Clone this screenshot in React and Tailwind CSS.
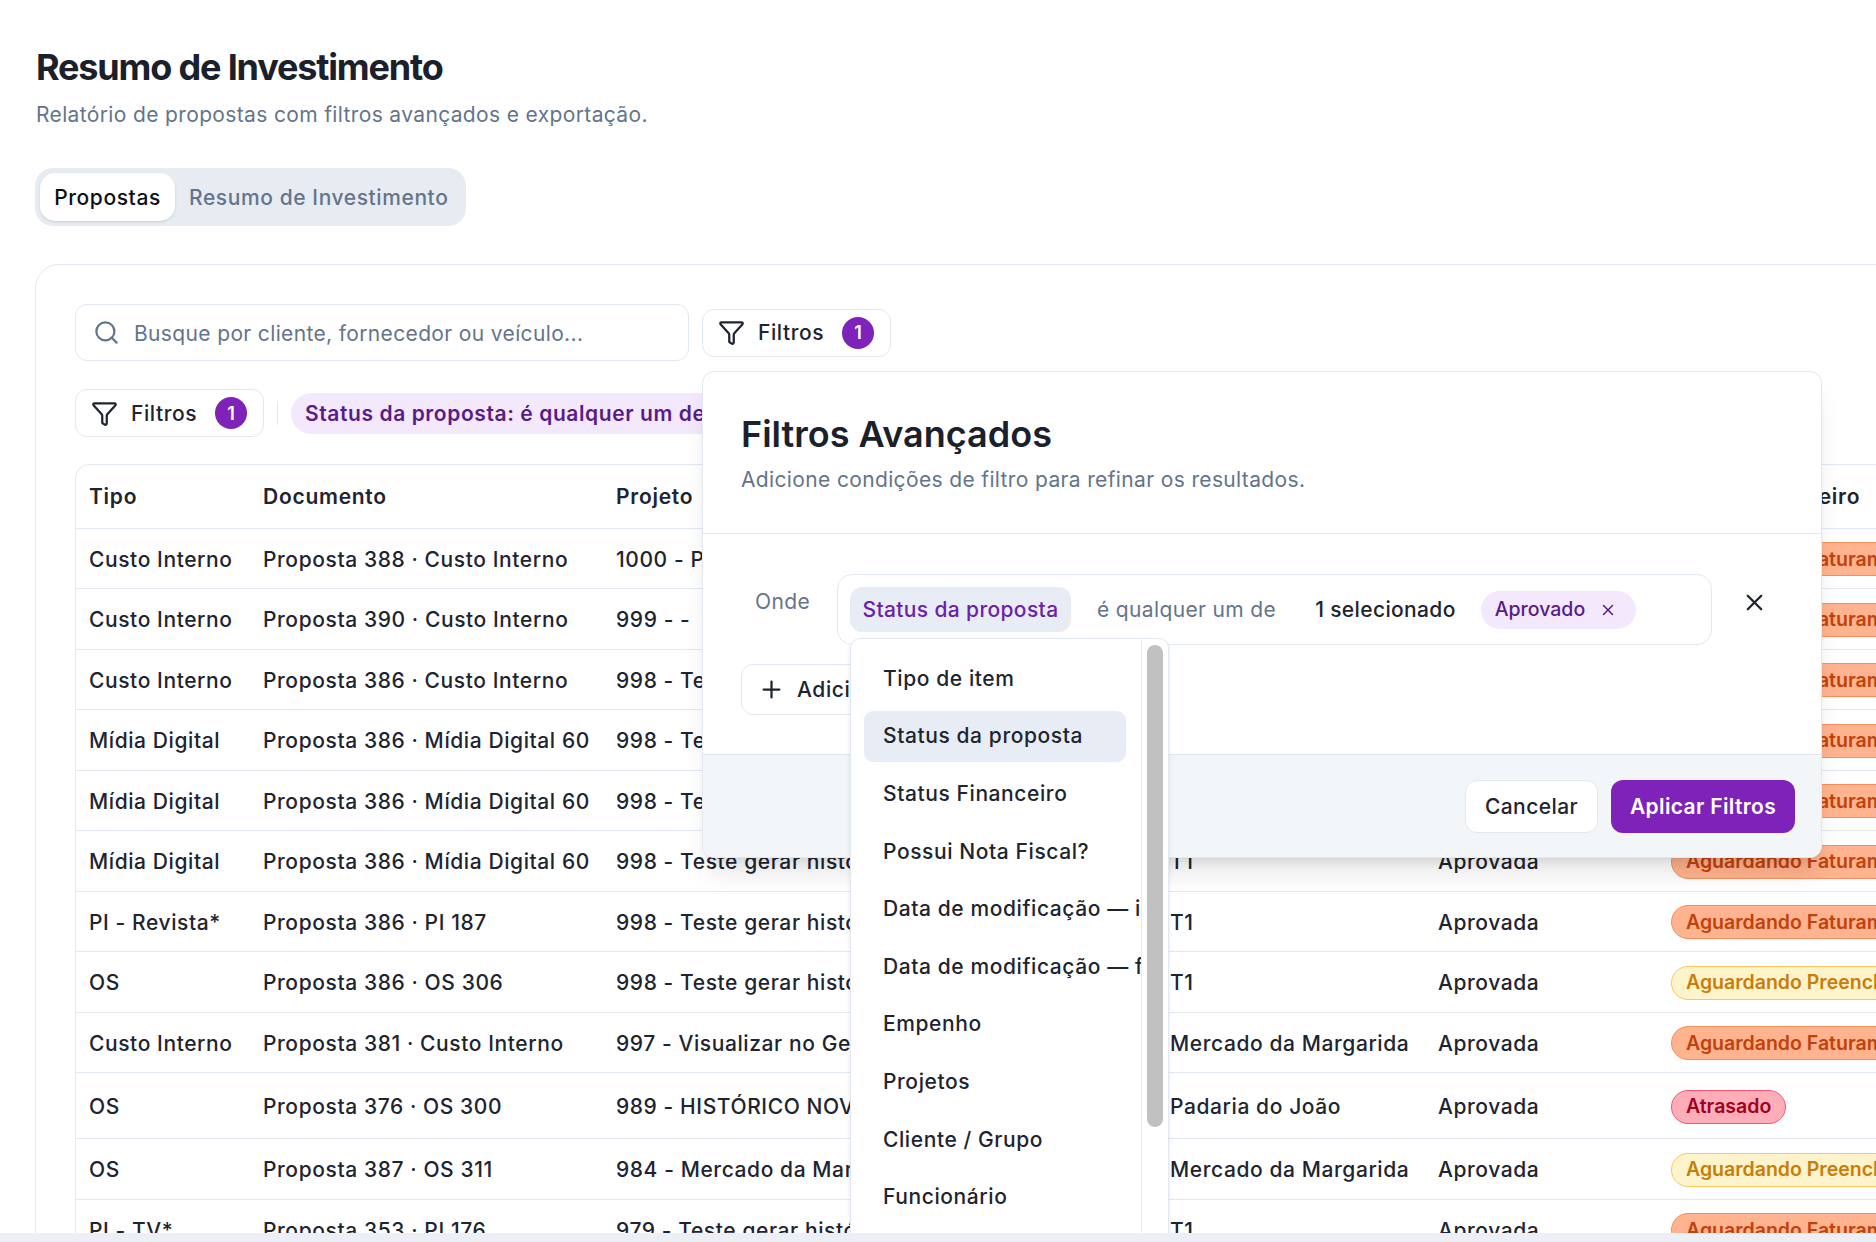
import React from 'react';
import { Search, Funnel, X, Plus } from 'lucide-react';

const AF = 'Aguardando Faturamento';
const AP = 'Aguardando Preenchimento';

const rows = [
  ['Custo Interno', 'Proposta 388 · Custo Interno', '1000 - Proposta de teste interno', 'T1', AF],
  ['Custo Interno', 'Proposta 390 · Custo Interno', '999 - -', 'T1', AF],
  ['Custo Interno', 'Proposta 386 · Custo Interno', '998 - Teste gerar histórico', 'T1', AF],
  ['Mídia Digital', 'Proposta 386 · Mídia Digital 60', '998 - Teste gerar histórico', 'T1', AF],
  ['Mídia Digital', 'Proposta 386 · Mídia Digital 60', '998 - Teste gerar histórico', 'T1', AF],
  ['Mídia Digital', 'Proposta 386 · Mídia Digital 60', '998 - Teste gerar histórico', 'T1', AF],
  ['PI - Revista*', 'Proposta 386 · PI 187', '998 - Teste gerar histórico', 'T1', AF],
  ['OS', 'Proposta 386 · OS 306', '998 - Teste gerar histórico', 'T1', AP],
  ['Custo Interno', 'Proposta 381 · Custo Interno', '997 - Visualizar no Gerenciador', 'Mercado da Margarida', AF],
  ['OS', 'Proposta 376 · OS 300', '989 - HISTÓRICO NOVO', 'Padaria do João', 'Atrasado'],
  ['OS', 'Proposta 387 · OS 311', '984 - Mercado da Margarida', 'Mercado da Margarida', AP],
  ['PI - TV*', 'Proposta 353 · PI 176', '979 - Teste gerar histórico', 'T1', AF],
];

const fields = [
  'Tipo de item',
  'Status da proposta',
  'Status Financeiro',
  'Possui Nota Fiscal?',
  'Data de modificação — início',
  'Data de modificação — fim',
  'Empenho',
  'Projetos',
  'Cliente / Grupo',
  'Funcionário',
  'Fornecedor',
];

function StatusBadge({ text }) {
  if (text === 'Atrasado') {
    return <span className="inline-flex h-[34px] items-center rounded-full border border-[#f7596f] bg-[#ffadb8] px-[14px] text-[19.5px] font-semibold tracking-normal text-[#9f0220]">{text}</span>;
  }
  if (text === AP) {
    return <span className="inline-flex h-[34px] items-center rounded-full border border-[#fbc65c] bg-[#fdf4cb] px-[14px] text-[19.5px] font-semibold tracking-normal whitespace-nowrap text-[#c97d0a]">{text}</span>;
  }
  return <span className="inline-flex h-[34px] items-center rounded-full border border-[#f98f5e] bg-[#ffb38e] px-[14px] text-[19.5px] font-semibold tracking-normal whitespace-nowrap text-[#c2410c]">{text}</span>;
}

function FilterButton() {
  return (
    <button className="flex h-[48px] w-[189px] shrink-0 items-center rounded-[12px] border border-[#e2e8f0] bg-white pl-[15px] text-[21px] font-medium tracking-[0.028em] text-[#1e2430]">
      <Funnel className="h-[27px] w-[27px]" strokeWidth={2} />
      <span className="ml-[13px] pt-[1px]">Filtros</span>
      <span className="ml-[18px] flex h-[32px] w-[32px] items-center justify-center rounded-full bg-[#7e22ba] text-[18px] font-semibold text-white">1</span>
    </button>
  );
}

function FieldDropdown() {
  return (
    <div className="absolute top-[266px] left-[147px] z-20 flex h-[680px] w-[319px] overflow-hidden rounded-[10px] border border-[#e2e8f0] bg-white shadow-md">
      <div className="w-[291px] shrink-0 overflow-hidden border-r border-[#e8ecf2] pt-[14px] pl-[13px]">
        <div className="flex w-[262px] flex-col gap-[6.6px]">
          {fields.map((f) => (
            <div
              key={f}
              className={`flex h-[51px] shrink-0 items-center rounded-[9px] pl-[19px] text-[21px] font-medium tracking-[0.028em] whitespace-nowrap text-[#1e2430] ${f === 'Status da proposta' ? 'bg-[#e8edf5]' : ''}`}
            >
              {f}
            </div>
          ))}
        </div>
      </div>
      <div className="flex-1 px-[5px] pt-[6px]">
        <div className="h-[482px] rounded-full bg-[#c1c1c1]" />
      </div>
    </div>
  );
}

function FilterModal() {
  return (
    <div className="absolute top-[371px] left-[702px] z-10 w-[1120px] rounded-[12px] border border-[#e2e8f0] bg-white shadow-xl">
      <div className="h-[162px] border-b border-[#e2e8f0] px-[38px] pt-[35px]">
        <h2 className="text-[36px] leading-[54px] font-semibold text-[#1a202c]">Filtros Avançados</h2>
        <p className="mt-[4px] text-[21px] leading-[30px] tracking-[0.017em] text-[#64748b]">Adicione condições de filtro para refinar os resultados.</p>
      </div>
      <div className="h-[220px] px-[38px] pt-[40px]">
        <div className="flex items-start">
          <span className="w-[96px] shrink-0 pt-[12px] pl-[14px] text-[21px] leading-[32px] tracking-[0.017em] text-[#64748b]">Onde</span>
          <div className="flex h-[71px] w-[875px] shrink-0 items-center rounded-[15px] border border-[#e2e8f0] pl-[12px]">
            <span className="flex h-[45px] w-[221px] items-center justify-center rounded-[12px] bg-[#e8edf5] text-[21px] font-medium tracking-[0.017em] text-[#6b21a8]">Status da proposta</span>
            <span className="ml-[26px] text-[21px] tracking-[0.017em] text-[#64748b]">é qualquer um de</span>
            <span className="ml-[39px] text-[21px] font-medium tracking-[0.017em] text-[#1e2430]">1 selecionado</span>
            <span className="ml-[25px] flex h-[38px] w-[155px] items-center rounded-full bg-[#f3e8fc] pl-[14px] text-[19.5px] font-medium text-[#581c87]">
              Aprovado
              <X className="ml-[14px] h-[18px] w-[18px]" strokeWidth={2} />
            </span>
          </div>
          <X className="mt-[15px] ml-[29px] h-[27px] w-[27px] text-[#1e2430]" strokeWidth={2} />
        </div>
        <button className="mt-[19px] flex h-[51px] w-[240px] items-center rounded-[12px] border border-[#e2e8f0] pl-[16px] text-[21px] font-medium tracking-[0.028em] whitespace-nowrap text-[#1e2430]">
          <Plus className="h-[27px] w-[27px]" strokeWidth={2} />
          <span className="ml-[12px]">Adicionar filtro</span>
        </button>
      </div>
      <div className="flex h-[103px] justify-end gap-[13px] rounded-b-[12px] border-t border-[#e2e8f0] bg-[#f3f6f9] pt-[25px] pr-[26px]">
        <button className="h-[53px] w-[133px] rounded-[12px] border border-[#e2e8f0] bg-white text-[21px] font-medium tracking-[0.02em] text-[#1e2430]">Cancelar</button>
        <button className="h-[53px] w-[184px] rounded-[12px] bg-[#7e22ba] text-[21px] font-semibold tracking-[0.017em] text-white">Aplicar Filtros</button>
      </div>
      <FieldDropdown />
    </div>
  );
}

export default function App() {
  return (
    <div className="flex h-[1242px] flex-col overflow-hidden bg-[#ecf0f6] font-['Inter',sans-serif]">
      <main className="relative h-[1233px] shrink-0 overflow-hidden bg-white pt-[43px] pl-[35px]">
        <h1 className="ml-[1px] text-[36px] leading-[48px] font-bold tracking-[-0.0325em] text-[#1a202c]">Resumo de Investimento</h1>
        <p className="mt-[9px] ml-[1px] text-[21px] leading-[30px] tracking-[0.017em] text-[#64748b]">Relatório de propostas com filtros avançados e exportação.</p>

        <div className="mt-[38px] flex h-[58px] w-[431px] items-center rounded-[18px] bg-[#e7ecf3] pl-[5px]">
          <span className="flex h-[48px] w-[135px] items-center justify-center rounded-[15px] bg-white pt-[1px] text-[21px] font-medium tracking-[0.028em] text-[#0b0f18] shadow-sm">Propostas</span>
          <span className="ml-[14px] pt-[1px] text-[21px] font-medium tracking-[0.028em] text-[#64748b]">Resumo de Investimento</span>
        </div>

        <section className="mt-[38px] w-[2400px] rounded-[24px] border border-[#e2e8f0] p-[39px]">
          <div className="flex h-[57px] items-center gap-[13px]">
            <div className="flex h-[57px] w-[614px] items-center rounded-[12px] border border-[#e2e8f0] pl-[17px]">
              <Search className="h-[27px] w-[27px] text-[#64748b]" strokeWidth={2} />
              <span className="ml-[14px] pt-[2px] text-[21px] tracking-[0.017em] text-[#64748b]">Busque por cliente, fornecedor ou veículo...</span>
            </div>
            <FilterButton />
          </div>

          <div className="mt-[28px] flex h-[48px] items-center">
            <FilterButton />
            <div className="mx-[13px] h-[24px] w-px bg-[#e2e8f0]" />
            <span className="flex h-[41px] items-center rounded-full bg-[#f3e8fc] px-[14px] pt-[1px] text-[21px] font-semibold tracking-[0.028em] whitespace-nowrap text-[#581c87]">Status da proposta: é qualquer um de Aprovado</span>
          </div>

          <div className="mt-[27px] overflow-hidden rounded-[14px] border border-[#e2e8f0]">
            <table className="w-[2320px] table-fixed border-collapse text-left text-[21px] tracking-[0.028em] text-[#1e2430]">
              <colgroup>
                <col className="w-[174px]" />
                <col className="w-[353px]" />
                <col className="w-[554px]" />
                <col className="w-[268px]" />
                <col className="w-[233px]" />
                <col />
              </colgroup>
              <thead>
                <tr className="h-[63px] border-b border-[#e2e8f0]">
                  {['Tipo', 'Documento', 'Projeto', 'Cliente', 'Status', 'Status Financeiro'].map((h) => (
                    <th key={h} className="pl-[13px] font-semibold tracking-[0.035em]">{h}</th>
                  ))}
                </tr>
              </thead>
              <tbody>
                {rows.map((r, i) => (
                  <tr key={i} className={`border-b border-[#e2e8f0] ${r[4] === 'Atrasado' ? 'h-[66px]' : 'h-[60.5px]'}`}>
                    <td className="pt-[2px] pl-[13px] font-medium">{r[0]}</td>
                    <td className="pt-[2px] pl-[13px] font-medium whitespace-nowrap">{r[1]}</td>
                    <td className="overflow-hidden pt-[2px] pl-[13px] font-medium whitespace-nowrap">{r[2]}</td>
                    <td className="pt-[2px] pl-[13px] font-medium whitespace-nowrap">{r[3]}</td>
                    <td className="pt-[2px] pl-[13px] font-medium">Aprovada</td>
                    <td className="pt-[2px] pl-[13px]"><StatusBadge text={r[4]} /></td>
                  </tr>
                ))}
              </tbody>
            </table>
          </div>
        </section>

        <FilterModal />
      </main>
    </div>
  );
}
